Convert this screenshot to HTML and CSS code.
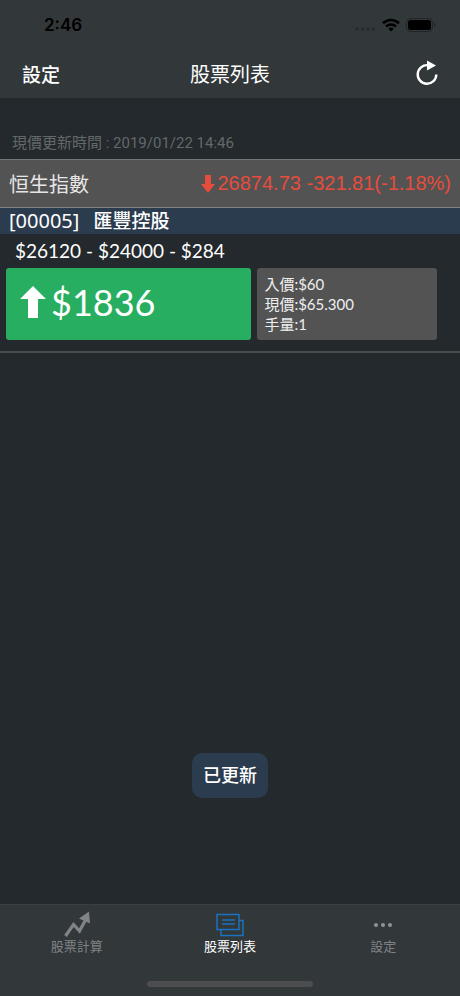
FILE: index.html
```html
<!DOCTYPE html>
<html lang="zh-Hant">

<head>
	<meta charset="UTF-8">
	<meta name="viewport" content="width=device-width, initial-scale=1.0">
	<title>股票列表</title>
	<link rel="stylesheet" href="styles.css">
</head>

<body>

	<header class="top">
		<div class="status">
			<span class="clock">2:46</span>
			<div class="status-icons">
				<svg class="signal" width="22" height="4" viewBox="0 0 22 4" fill="#262b2d">
					<circle cx="3" cy="2" r="1.700" /><circle cx="8.500" cy="2" r="1.700" /><circle cx="14" cy="2" r="1.700" /><circle cx="19.500" cy="2" r="1.700" />
				</svg>
				<svg width="18" height="14" viewBox="0 0 18 14" fill="none" stroke="#000" stroke-width="2.6">
					<path d="M1 5.2a11.5 11.5 0 0 1 16 0" />
					<path d="M4 8.5a7.2 7.2 0 0 1 10 0" />
					<path d="M9 13.5l-2.7-2.8a4 4 0 0 1 5.4 0z" fill="#000" stroke="none" />
				</svg>
				<svg width="30" height="14" viewBox="0 0 30 14">
					<rect x="0.5" y="0.5" width="26" height="13" rx="4" fill="none" stroke="#202527" />
					<rect x="2" y="2" width="23" height="10" rx="2.5" fill="#000" />
					<path d="M28 5c2 .5 2 3.500 0 4z" fill="#202527" />
				</svg>
			</div>
		</div>
		<nav class="navbar">
			<button class="nav-button" type="button">設定</button>
			<h1>股票列表</h1>
			<button class="nav-button refresh" type="button" aria-label="重新整理">
				<svg width="22" height="26" viewBox="0 0 22 26">
					<path d="M12 5.200a9.300 9.300 0 1 0 8.300 9.300" fill="none" stroke="#fff" stroke-width="2.400" />
					<path d="M11 0.500l9 5-9 5z" fill="#fff" />
				</svg>
			</button>
		</nav>
	</header>

	<main>
		<p class="updated">現價更新時間 : 2019/01/22 14:46</p>

		<section class="index-row">
			<h2>恒生指數</h2>
			<p class="index-value">
				<svg width="14" height="18" viewBox="0 0 14 18"><path d="M4 0h6v9h4l-7 9-7-9h4z" fill="#e74c3c" /></svg>
				<span>26874.73 -321.81(-1.18%)</span>
			</p>
		</section>

		<article class="stock">
			<h3><span class="code">[00005]</span><span>匯豐控股</span></h3>
			<p class="formula">$26120 - $24000 - $284</p>
			<div class="cards">
				<div class="profit">
					<svg width="26" height="32" viewBox="0 0 26 32"><path d="M13 0l13 13h-8v19h-10v-19h-8z" fill="#fff" /></svg>
					<span>$1836</span>
				</div>
				<div class="detail">
					<p>入價:$60</p>
					<p>現價:$65.300</p>
					<p>手量:1</p>
				</div>
			</div>
		</article>
	</main>

	<div class="toast" role="status">已更新</div>

	<footer class="bottom">
		<nav class="tabs">
			<a class="tab" href="#calc">
				<svg width="28" height="26" viewBox="0 0 28 26">
					<path d="M2.500 25l8-11.500 6 6.500 6-11" fill="none" stroke="#808486" stroke-width="3.200" />
					<path d="M26 0.500l-10 7 11 5z" fill="#808486" />
				</svg>
				股票計算
			</a>
			<a class="tab active" href="#list">
				<svg width="28" height="26" viewBox="0 0 28 26" fill="none" stroke="#1a73c0" stroke-width="1.500">
					<path d="M1 3.500h22v15h-22z" />
					<path d="M5 18.500v6h22v-15h-4M6 9h13M6 13h13" />
				</svg>
				股票列表
			</a>
			<a class="tab" href="#settings">
				<svg width="28" height="26" viewBox="0 0 28 26" fill="#909496">
					<circle cx="7" cy="14" r="2" /><circle cx="14" cy="14" r="2" /><circle cx="21" cy="14" r="2" />
				</svg>
				設定
			</a>
		</nav>
		<div class="home-bar"></div>
	</footer>

</body>

</html>
```
FILE: styles.css
```css
* {
	box-sizing: border-box;
}

body {
	display: flex;
	flex-direction: column;
	min-height: 100vh;
	margin: 0;
	background: #23292c;
	color: #fff;
	font-family: Lato, "Noto Sans CJK TC", sans-serif;
}

h1,
h2,
h3,
p {
	margin: 0;
	font-weight: normal;
}

.top,
.bottom {
	background: #323739;
}

.status {
	display: flex;
	justify-content: space-between;
	align-items: center;
	height: 50px;
	padding: 0 24px 0 44px;
}

.clock {
	color: #000;
	font: 600 17px Inter, sans-serif;
}

.status-icons {
	display: flex;
	align-items: center;
	gap: 6px;
}

.signal {
	margin-top: 8px;
}

.navbar {
	display: grid;
	grid-template-columns: 1fr auto 1fr;
	align-items: center;
	height: 48px;
	padding: 0 22px 2px;
}

.navbar h1 {
	font-size: 20px;
}

.nav-button {
	justify-self: start;
	padding: 0;
	border: none;
	background: none;
	color: #fff;
	font: 500 19px "Noto Sans CJK TC", sans-serif;
	cursor: pointer;
}

.refresh {
	justify-self: end;
}

svg {
	display: block;
	flex: none;
}

.updated {
	padding: 35px 12px 6px;
	color: #63686a;
	font: 15px/20px Roboto, "Noto Sans CJK TC", sans-serif;
}

.index-row {
	display: flex;
	justify-content: space-between;
	align-items: center;
	height: 49px;
	padding: 0 9px;
	border-top: 1px solid #727677;
	border-bottom: 1px solid #808486;
	background: #535353;
}

.index-row h2 {
	color: #e6e6e6;
	font-size: 20px;
}

.index-value {
	display: flex;
	align-items: center;
	gap: 3px;
	color: #e74c3c;
	font: 20px "Liberation Sans", sans-serif;
}

.stock {
	padding-bottom: 11px;
	border-bottom: 2px solid #484d4e;
}

.stock h3 {
	display: flex;
	gap: 14px;
	padding: 0 9px;
	background: #2c3c4f;
	font-size: 19px;
	font-weight: 500;
	line-height: 26px;
}

.stock .code {
	font: 20px/26px "Noto Sans", sans-serif;
}

.formula {
	padding: 0 15px;
	font-size: 19px;
	line-height: 34px;
}

.cards {
	display: grid;
	grid-template-columns: 246fr 180fr;
	gap: 6px;
	padding: 0 23px 0 6px;
}

.profit,
.detail {
	height: 72px;
	border-radius: 3px;
}

.profit {
	display: flex;
	align-items: center;
	gap: 5px;
	padding: 0 14px 4px;
	background: #27ae60;
	font-size: 36px;
}

.detail {
	padding: 6px 7px;
	background: #535353;
	color: #eee;
	font-size: 15px;
	line-height: 20px;
}

.toast {
	position: fixed;
	bottom: 198px;
	left: 50%;
	padding: 0 11px;
	border-radius: 10px;
	background: #2c3c4f;
	font-size: 18px;
	font-weight: 500;
	line-height: 45px;
	transform: translateX(-50%);
}

.bottom {
	margin-top: auto;
	padding: 6px 0 9px;
	border-top: 1px solid #3a3f41;
}

.tabs {
	display: grid;
	grid-template-columns: repeat(3, 1fr);
}

.tab {
	display: flex;
	flex-direction: column;
	align-items: center;
	color: #808486;
	font-size: 13px;
	line-height: 18px;
	text-decoration: none;
}

.active {
	color: #fff;
}

.home-bar {
	width: 36%;
	height: 6px;
	margin: 26px auto 0;
	border-radius: 3px;
	background: #4b4d4e;
}
```
